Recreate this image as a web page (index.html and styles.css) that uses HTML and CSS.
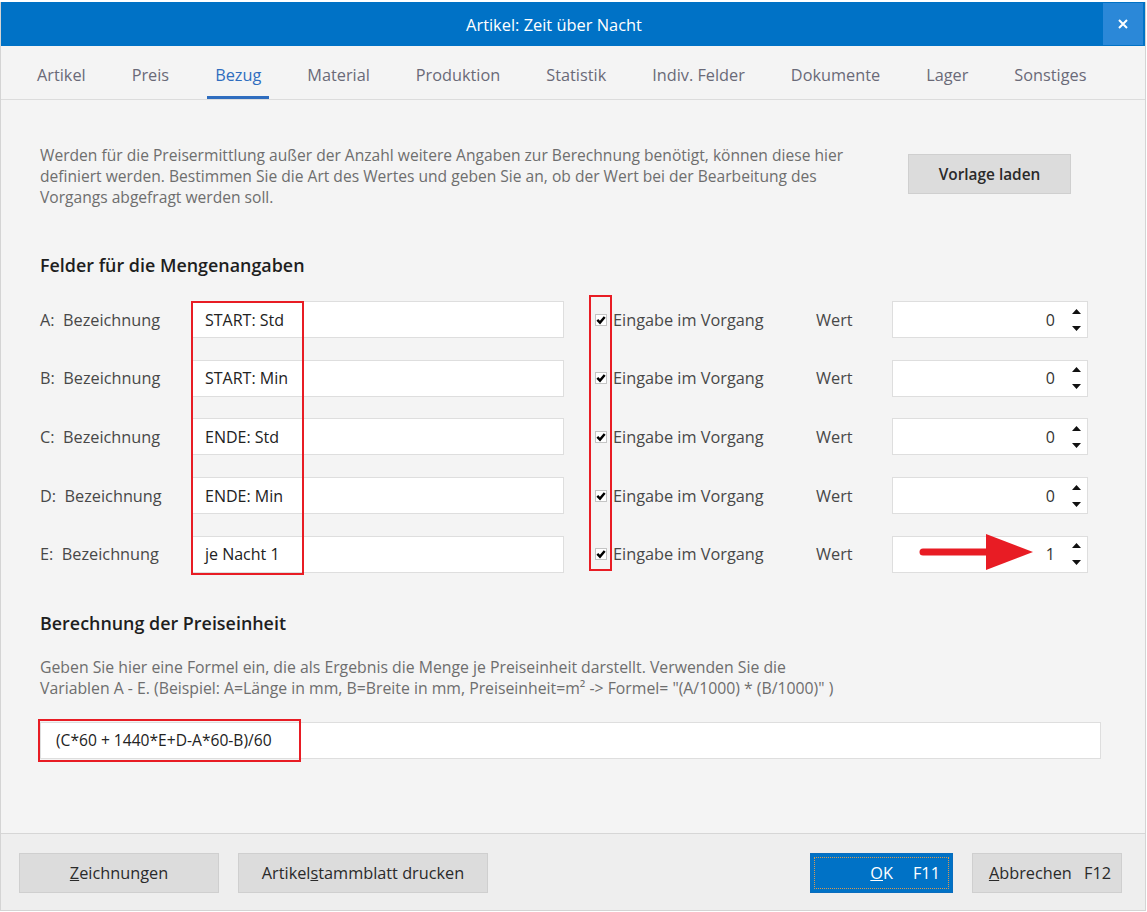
FILE: index.html
```html
<!DOCTYPE html>
<html lang="de">
<head>
  <meta charset="UTF-8" />
  <title>Artikel: Zeit über Nacht</title>
  <link rel="stylesheet" href="styles.css">
</head>
<body>

  <div class="window">
    <div class="titlebar">
      <span class="title">Artikel: Zeit über Nacht</span>
      <span class="close">
        <svg width="12" height="12" viewBox="0 0 12 12"><path d="M2 2 L10 10 M10 2 L2 10" stroke="#fff" stroke-width="2"/></svg>
      </span>
    </div>

    <!-- Reiter -->
    <div class="tabs">
      <span class="tab">Artikel</span>
      <span class="tab">Preis</span>
      <span class="tab active">Bezug</span>
      <span class="tab">Material</span>
      <span class="tab">Produktion</span>
      <span class="tab">Statistik</span>
      <span class="tab">Indiv. Felder</span>
      <span class="tab">Dokumente</span>
      <span class="tab">Lager</span>
      <span class="tab">Sonstiges</span>
    </div>

    <div class="content">
      <div class="intro">
        <p>Werden für die Preisermittlung außer der Anzahl weitere Angaben zur Berechnung benötigt, können diese hier<br>
        definiert werden. Bestimmen Sie die Art des Wertes und geben Sie an, ob der Wert bei der Bearbeitung des<br>
        Vorgangs abgefragt werden soll.</p>
        <button class="btn btn-template">Vorlage laden</button>
      </div>

      <h2>Felder für die Mengenangaben</h2>

      <div class="fields">
        <div class="row">
          <span class="label">A:&nbsp; Bezeichnung</span>
          <div class="text-input">START: Std</div>
          <span></span>
          <span class="check"><svg width="12" height="12" viewBox="0 0 12 12"><rect x="0.5" y="0.5" width="11" height="11" fill="#fff" stroke="#c4c4c4"/><path d="M2.3 5.8 L5 8.6 L9.7 3" fill="none" stroke="#000" stroke-width="2.4"/></svg></span>
          <span class="check-label">Eingabe im Vorgang</span>
          <span class="label">Wert</span>
          <div class="spinner"><span class="value">0</span><span class="arrows"><svg width="9" height="22" viewBox="0 0 9 22"><path d="M4.5 0 L9 5 L0 5 Z M0 17 L9 17 L4.5 22 Z" fill="#111"/></svg></span></div>
        </div>
        <div class="row">
          <span class="label">B:&nbsp; Bezeichnung</span>
          <div class="text-input">START: Min</div>
          <span></span>
          <span class="check"><svg width="12" height="12" viewBox="0 0 12 12"><rect x="0.5" y="0.5" width="11" height="11" fill="#fff" stroke="#c4c4c4"/><path d="M2.3 5.8 L5 8.6 L9.7 3" fill="none" stroke="#000" stroke-width="2.4"/></svg></span>
          <span class="check-label">Eingabe im Vorgang</span>
          <span class="label">Wert</span>
          <div class="spinner"><span class="value">0</span><span class="arrows"><svg width="9" height="22" viewBox="0 0 9 22"><path d="M4.5 0 L9 5 L0 5 Z M0 17 L9 17 L4.5 22 Z" fill="#111"/></svg></span></div>
        </div>
        <div class="row">
          <span class="label">C:&nbsp; Bezeichnung</span>
          <div class="text-input">ENDE: Std</div>
          <span></span>
          <span class="check"><svg width="12" height="12" viewBox="0 0 12 12"><rect x="0.5" y="0.5" width="11" height="11" fill="#fff" stroke="#c4c4c4"/><path d="M2.3 5.8 L5 8.6 L9.7 3" fill="none" stroke="#000" stroke-width="2.4"/></svg></span>
          <span class="check-label">Eingabe im Vorgang</span>
          <span class="label">Wert</span>
          <div class="spinner"><span class="value">0</span><span class="arrows"><svg width="9" height="22" viewBox="0 0 9 22"><path d="M4.5 0 L9 5 L0 5 Z M0 17 L9 17 L4.5 22 Z" fill="#111"/></svg></span></div>
        </div>
        <div class="row">
          <span class="label">D:&nbsp; Bezeichnung</span>
          <div class="text-input">ENDE: Min</div>
          <span></span>
          <span class="check"><svg width="12" height="12" viewBox="0 0 12 12"><rect x="0.5" y="0.5" width="11" height="11" fill="#fff" stroke="#c4c4c4"/><path d="M2.3 5.8 L5 8.6 L9.7 3" fill="none" stroke="#000" stroke-width="2.4"/></svg></span>
          <span class="check-label">Eingabe im Vorgang</span>
          <span class="label">Wert</span>
          <div class="spinner"><span class="value">0</span><span class="arrows"><svg width="9" height="22" viewBox="0 0 9 22"><path d="M4.5 0 L9 5 L0 5 Z M0 17 L9 17 L4.5 22 Z" fill="#111"/></svg></span></div>
        </div>
        <div class="row">
          <span class="label">E:&nbsp; Bezeichnung</span>
          <div class="text-input">je Nacht 1</div>
          <span></span>
          <span class="check"><svg width="12" height="12" viewBox="0 0 12 12"><rect x="0.5" y="0.5" width="11" height="11" fill="#fff" stroke="#c4c4c4"/><path d="M2.3 5.8 L5 8.6 L9.7 3" fill="none" stroke="#000" stroke-width="2.4"/></svg></span>
          <span class="check-label">Eingabe im Vorgang</span>
          <span class="label">Wert</span>
          <div class="spinner">
            <!-- roter Pfeil (Markierung) -->
            <svg class="red-arrow" width="114" height="36" viewBox="0 0 114 36"><path d="M4 18 L70 18" stroke="#e81c24" stroke-width="7" stroke-linecap="round"/><path d="M67 0 L114 18 L67 36 Z" fill="#e81c24"/></svg>
            <span class="value">1</span><span class="arrows"><svg width="9" height="22" viewBox="0 0 9 22"><path d="M4.5 0 L9 5 L0 5 Z M0 17 L9 17 L4.5 22 Z" fill="#111"/></svg></span>
          </div>
        </div>

        <!-- rote Markierungen -->
        <div class="mark mark-names"></div>
        <div class="mark mark-checks"></div>
      </div>

      <h2 class="second">Berechnung der Preiseinheit</h2>
      <p class="hint">Geben Sie hier eine Formel ein, die als Ergebnis die Menge je Preiseinheit darstellt. Verwenden Sie die<br>
      Variablen A - E. (Beispiel: A=Länge in mm, B=Breite in mm, Preiseinheit=m² -&gt; Formel= "(A/1000) * (B/1000)" )</p>

      <div class="formula">
        <div class="text-input formula-input">(C*60 + 1440*E+D-A*60-B)/60</div>
        <div class="mark mark-formula"></div>
      </div>
    </div>

    <div class="footer">
      <button class="btn btn-draw"><u>Z</u>eichnungen</button>
      <button class="btn btn-print">Artikel<u>s</u>tammblatt drucken</button>
      <span class="spacer"></span>
      <button class="btn btn-ok"><span class="focus"><u>O</u>K <span class="key">F11</span></span></button>
      <button class="btn btn-cancel"><u>A</u>bbrechen <span class="key">F12</span></button>
    </div>
  </div>

</body>
</html>
```

FILE: styles.css
```css
* {
  box-sizing: border-box;
}
body {
  margin: 0;
  padding-top: 2px;
  background-color: #fff;
  font-family: "Open Sans", "Noto Sans", sans-serif;
  font-size: 15.6px;
}
.window {
  width: 1146px;
  height: 909px;
  display: flex;
  flex-direction: column;
  border: 1px solid #d4d4d4;
  border-top: none;
  background-color: #f4f4f4;
}
.titlebar {
  height: 44px;
  background-color: #0072c6;
  color: #fff;
  display: flex;
  align-items: center;
}
.title {
  flex: 1;
  text-align: center;
  font-size: 16.4px;
  padding-left: 4px;
}
.close {
  width: 40px;
  height: 42px;
  margin-right: 2px;
  background-color: #2b88d8;
  display: flex;
  align-items: center;
  justify-content: center;
}

/* Reiter */
.tabs {
  height: 54px;
  display: flex;
  gap: 30px;
  padding-left: 28px;
  border-bottom: 1px solid #dcdcdc;
}
.tab {
  padding: 7px 8px 0;
  display: flex;
  align-items: center;
  color: #6a6a78;
  font-size: 16.3px;
  border-bottom: 3px solid transparent;
}
.tab.active {
  color: #2f6dbf;
  border-bottom-color: #2f6dbf;
}

.content {
  flex: 1;
  padding: 45px 44px 0 39px;
}
.intro {
  display: flex;
  justify-content: space-between;
  align-items: flex-start;
}
.intro p {
  margin: 0;
  color: #6e6e6e;
  line-height: 21px;
}
.btn {
  font-family: inherit;
  font-size: 16.3px;
  color: #2a2a2a;
  background-color: #dcdcdc;
  border: 1px solid #cfcfcf;
  height: 40px;
  cursor: pointer;
}
.btn-template {
  width: 163px;
  margin-top: 9px;
  margin-right: 30px;
  font-size: 15.4px;
  font-weight: 600;
}
h2 {
  margin: 45px 0 0;
  font-size: 17.9px;
  font-weight: 600;
  line-height: 24px;
  color: #1e1e1e;
}
h2.second {
  margin-top: 38px;
}

/* Felder */
.fields {
  position: relative;
  margin-top: 24px;
  display: flex;
  flex-direction: column;
  gap: 21.7px;
}
.row {
  display: grid;
  grid-template-columns: 151px 373px 31px 18px 203px 76px 196px;
  align-items: center;
  height: 37px;
}
.label {
  color: #484848;
  font-size: 16.3px;
}
.text-input {
  height: 37px;
  background-color: #fff;
  border: 1px solid #dedede;
  padding-left: 13px;
  display: flex;
  align-items: center;
  color: #222;
  font-size: 16px;
}
.check {
  display: flex;
  align-items: center;
  height: 12px;
}
.check-label {
  color: #484848;
  font-size: 16.3px;
  white-space: nowrap;
}
.spinner {
  position: relative;
  height: 37px;
  background-color: #fff;
  border: 1px solid #dedede;
  display: flex;
  align-items: center;
  justify-content: flex-end;
  color: #333;
  font-size: 16px;
}
.value {
  margin-right: 17px;
}
.arrows {
  width: 9px;
  margin-right: 6px;
  display: flex;
  align-items: center;
}
.red-arrow {
  position: absolute;
  left: 26px;
  top: -3px;
}
.mark {
  position: absolute;
  border: 2px solid #e81c24;
}
.mark-names {
  left: 151px;
  top: 0;
  width: 113px;
  height: 274px;
}
.mark-checks {
  left: 549px;
  top: -6px;
  width: 23px;
  height: 276px;
}

/* Formel */
.hint {
  margin: 22px 0 0;
  color: #6e6e6e;
  line-height: 21px;
  font-size: 15.8px;
}
.formula {
  position: relative;
  margin-top: 23px;
}
.formula-input {
  padding-left: 15px;
  font-size: 15.6px;
}
.mark-formula {
  left: -2px;
  top: -3px;
  width: 263px;
  height: 43px;
}

/* Fußleiste */
.footer {
  height: 77px;
  border-top: 1px solid #d6d6d6;
  background-color: #eeeeee;
  display: flex;
  align-items: flex-start;
  gap: 19px;
  padding: 19px 23px 0 18px;
}
.spacer {
  flex: 1;
}
.btn-draw {
  width: 200px;
}
.btn-print {
  width: 250px;
}
.btn-ok {
  width: 143px;
  background-color: #0072c6;
  border-color: #0a6dbd;
  color: #fff;
  padding: 3px;
}
.btn-ok .focus {
  display: flex;
  height: 100%;
  align-items: center;
  justify-content: flex-end;
  padding-right: 8px;
  border: 1px dotted #d69a52;
}
.btn-ok .key {
  margin-left: 20px;
}
.btn-cancel {
  width: 150px;
  padding-left: 12px;
}
.btn-cancel .key {
  margin-left: 8px;
}
```
